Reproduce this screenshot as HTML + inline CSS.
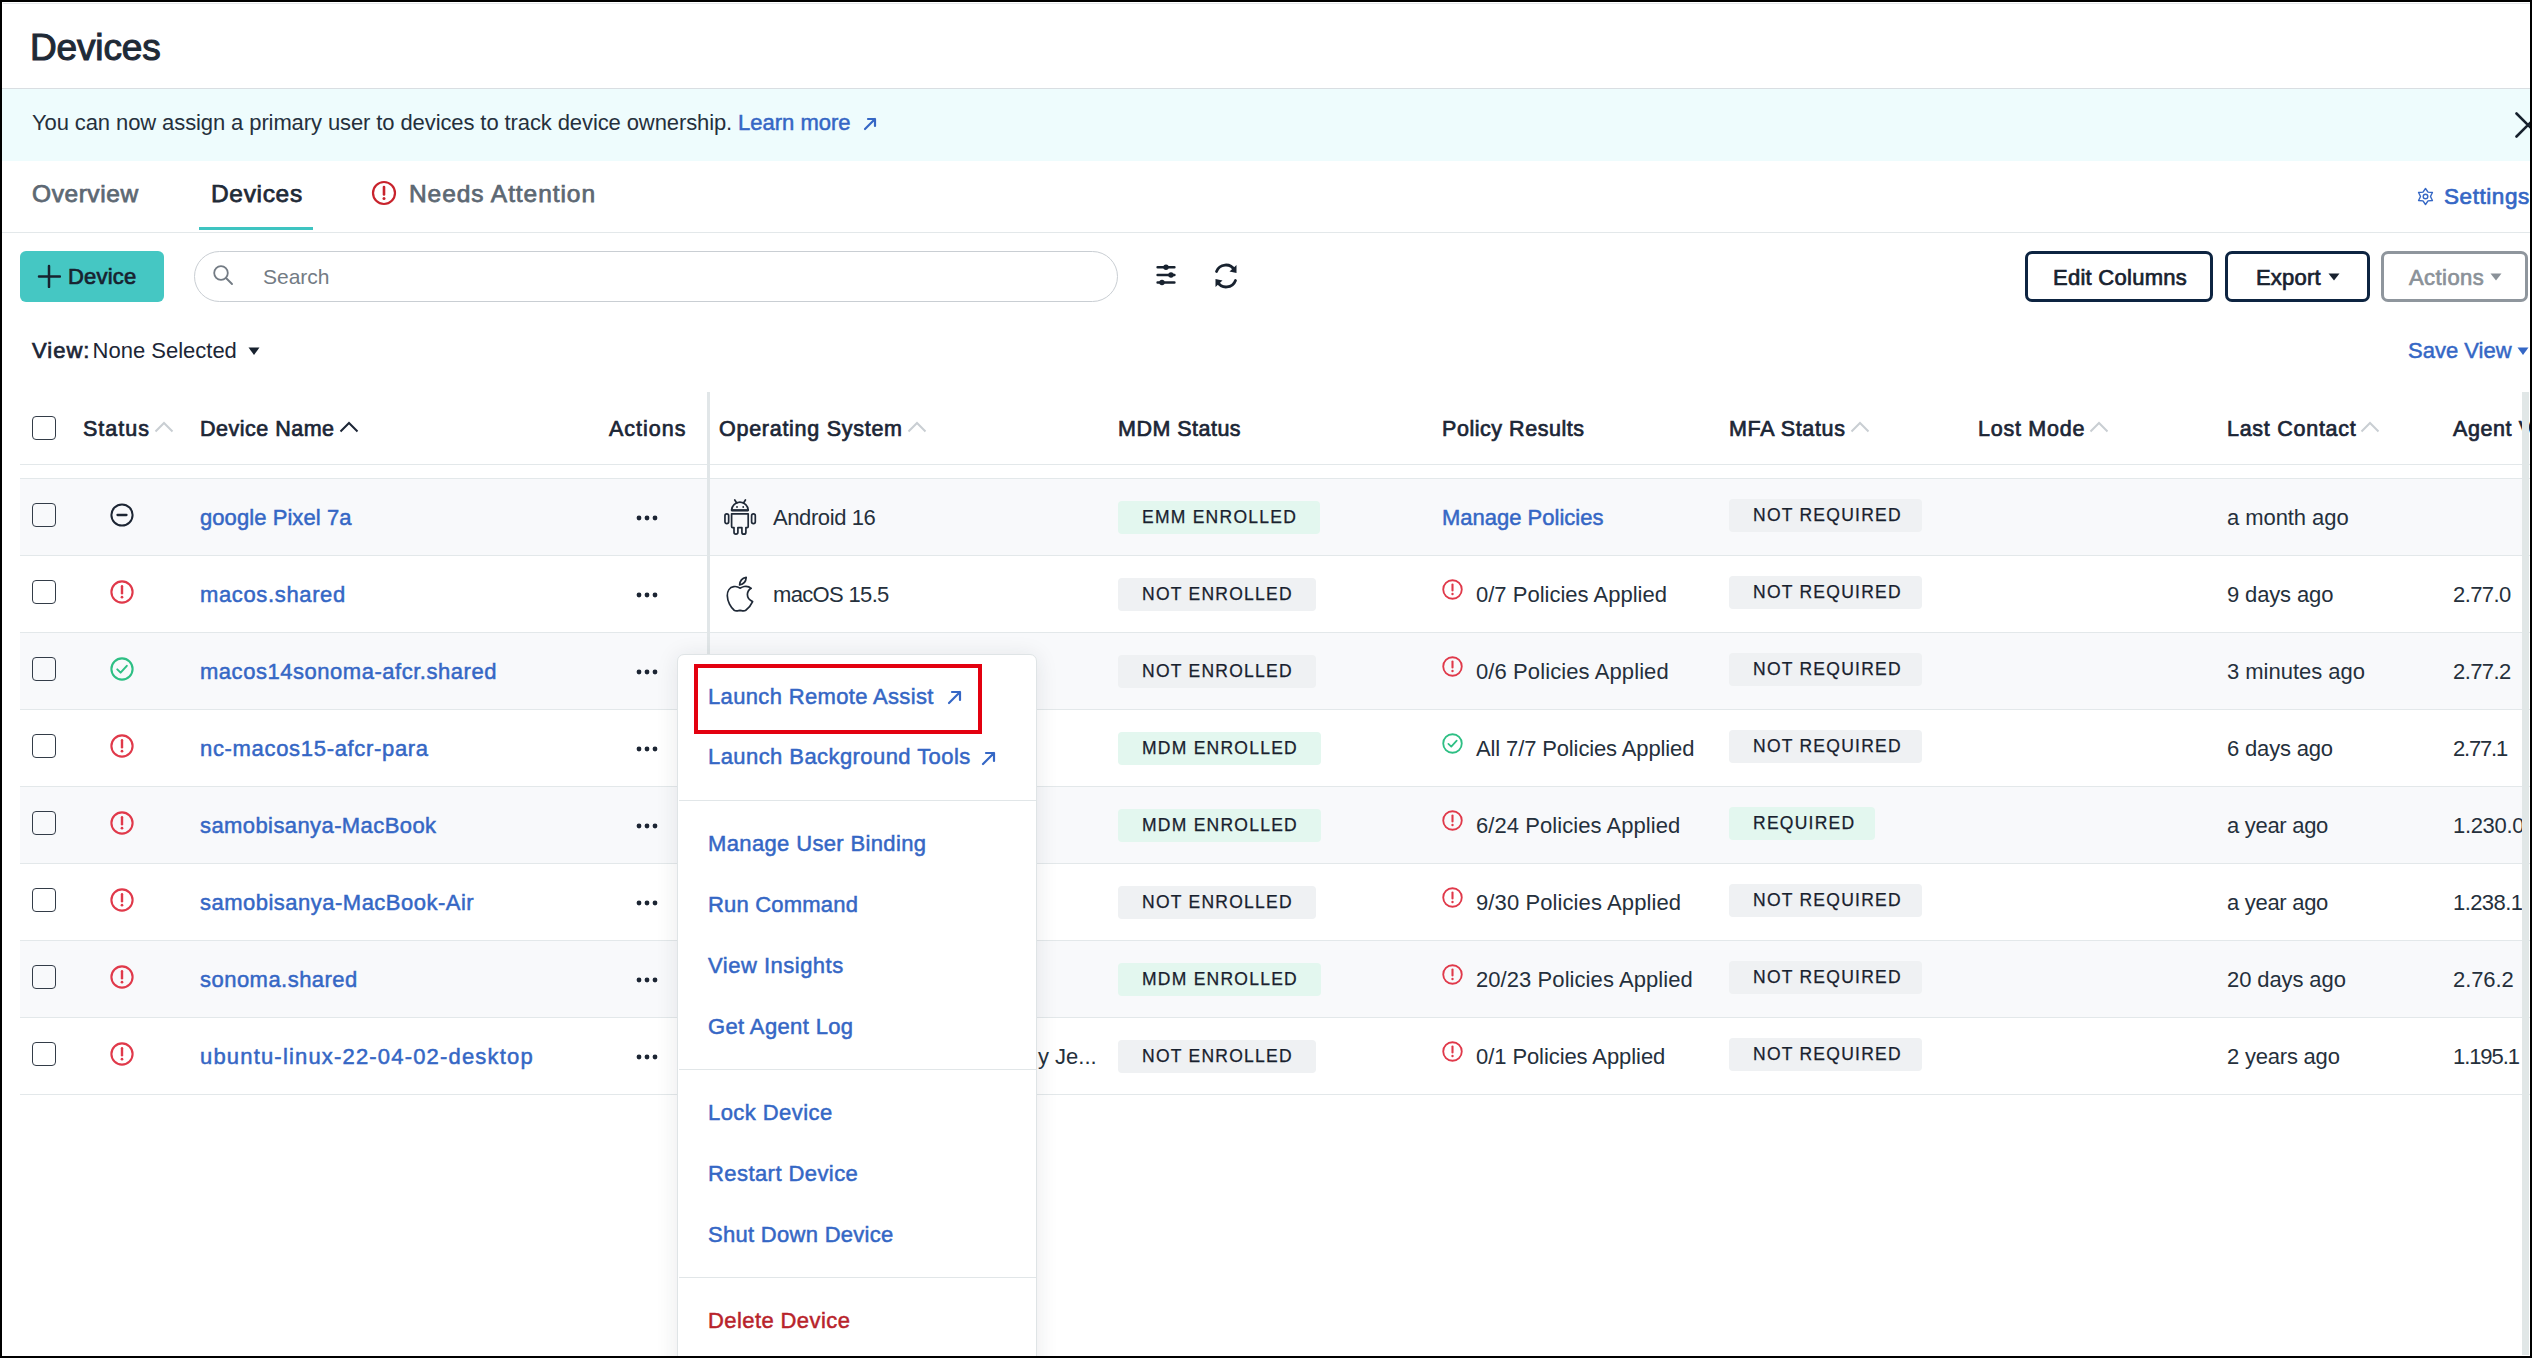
<!DOCTYPE html>
<html>
<head>
<meta charset="utf-8">
<style>
*{box-sizing:border-box;margin:0;padding:0}
html,body{width:2532px;height:1358px;overflow:hidden;background:#000}
body{font-family:"Liberation Sans",sans-serif;color:#2a3441;position:relative}
#page{position:absolute;left:2px;top:2px;width:2528px;height:1354px;background:#fff;overflow:hidden}
.a{position:absolute;white-space:nowrap}
.t{position:absolute;white-space:nowrap;line-height:30px;height:30px}
.b{font-weight:700}
.link{color:#3567c5}
.hline{position:absolute;left:18px;width:2510px;height:1px;background:#e3e8ea}
.row{position:absolute;left:18px;width:2502px;height:76px}
.alt{background:#f8f9fb}
.cb{position:absolute;width:24px;height:24px;border:1.7px solid #333c48;border-radius:4px;background:transparent}
.badge{position:absolute;height:33px;line-height:33px;font-size:17.5px;letter-spacing:1.25px;color:#18212e;padding-left:24px;border-radius:4px;-webkit-text-stroke:0.25px #18212e}
.green{background:#e3f7ef}
.grey{background:#eff1f3}
.hdr{position:absolute;top:412px;line-height:30px;height:30px;font-size:21.5px;font-weight:400;color:#1c2636;-webkit-text-stroke:0.7px #1c2636;white-space:nowrap}
.med{-webkit-text-stroke:0.5px currentColor}
</style>
</head>
<body>
<div id="page">
  <!-- top thin line -->
  <div class="a" style="left:1px;top:1px;width:2527px;height:1px;background:#e6e9ec"></div>

  <!-- Title -->
  <div class="t" style="left:28px;top:26px;font-size:37px;line-height:40px;height:40px;color:#1f2a37;-webkit-text-stroke:1.1px #1f2a37;letter-spacing:-0.15px">Devices</div>

  <!-- Banner -->
  <div class="a" style="left:0;top:86px;width:2528px;height:1px;background:#d9dee2"></div>
  <div class="a" style="left:0;top:87px;width:2528px;height:72px;background:#eefcfd"></div>
  <div class="t" style="left:30px;top:106px;font-size:22px;color:#25303c;letter-spacing:-0.1px">You can now assign a primary user to devices to track device ownership.</div>
  <div class="t link med" style="left:736px;top:106px;font-size:22px">Learn more</div>
  <svg class="a" style="left:858px;top:112px" width="20" height="20" viewBox="0 0 20 20"><path d="M5 15 L15 5 M8 5 H15 V12" fill="none" stroke="#3567c5" stroke-width="2.2" stroke-linecap="round" stroke-linejoin="round"/></svg>
  <svg class="a" style="left:2512px;top:110px" width="30" height="30" viewBox="0 0 30 30"><path d="M2.5 1.5 L25.5 24.5 M2.5 24.5 L25.5 1.5" fill="none" stroke="#17212e" stroke-width="2.6" stroke-linecap="round"/></svg>

  <!-- Tabs -->
  <div class="t" style="left:30px;top:177px;font-size:24.5px;color:#5d6873;-webkit-text-stroke:0.75px #5d6873;letter-spacing:0.57px">Overview</div>
  <div class="t" style="left:209px;top:177px;font-size:24.5px;color:#1f2a37;-webkit-text-stroke:0.75px #1f2a37;letter-spacing:0.67px">Devices</div>
  <svg class="a" style="left:368px;top:177px" width="28" height="28" viewBox="0 0 28 28"><circle cx="14" cy="14" r="11" fill="none" stroke="#c8232c" stroke-width="2.2"/><path d="M14 8 V15.5" stroke="#c8232c" stroke-width="2.6" stroke-linecap="round"/><circle cx="14" cy="19.6" r="1.5" fill="#c8232c"/></svg>
  <div class="t" style="left:407px;top:177px;font-size:24.5px;color:#5d6873;-webkit-text-stroke:0.75px #5d6873;letter-spacing:0.93px">Needs Attention</div>
  <div class="a" style="left:197px;top:225px;width:114px;height:3px;background:#3ec4c1"></div>
  <div class="a" style="left:0;top:230px;width:2528px;height:1px;background:#e3e8ea"></div>
  <svg class="a" style="left:2413px;top:184px" width="22" height="22" viewBox="0 0 22 22"><path d="M10.50 2.50 L13.00 6.17 L17.43 6.50 L15.50 10.50 L17.43 14.50 L13.00 14.83 L10.50 18.50 L8.00 14.83 L3.57 14.50 L5.50 10.50 L3.57 6.50 L8.00 6.17 Z" fill="none" stroke="#3567c5" stroke-width="1.4" stroke-linejoin="round"/><circle cx="10.5" cy="10.5" r="2.3" fill="none" stroke="#3567c5" stroke-width="1.4"/></svg>
  <div class="t" style="left:2442px;top:180px;font-size:22.5px;color:#3567c5;-webkit-text-stroke:0.7px #3567c5;letter-spacing:0.57px">Settings</div>

  <!-- Toolbar -->
  <div class="a" style="left:18px;top:249px;width:144px;height:51px;background:#45c7c3;border-radius:6px"></div>
  <svg class="a" style="left:35px;top:262px" width="24" height="24" viewBox="0 0 24 24"><path d="M12 2 V23 M2 12.5 H23" stroke="#18222f" stroke-width="2.5" stroke-linecap="round"/></svg>
  <div class="t" style="left:66px;top:260px;font-size:22px;color:#18222f;-webkit-text-stroke:0.7px #18222f;letter-spacing:0.2px">Device</div>
  <div class="a" style="left:192px;top:249px;width:924px;height:51px;border:1.5px solid #c9ced3;border-radius:26px"></div>
  <svg class="a" style="left:209px;top:261px" width="24" height="24" viewBox="0 0 24 24"><circle cx="10" cy="10" r="6.8" fill="none" stroke="#737b84" stroke-width="1.8"/><path d="M15 15 L21 21" stroke="#737b84" stroke-width="1.9" stroke-linecap="round"/></svg>
  <div class="t" style="left:261px;top:260px;font-size:21px;color:#737b84">Search</div>
  <svg class="a" style="left:1152px;top:262px" width="26" height="24" viewBox="0 0 26 24"><g stroke="#18222f" stroke-width="2.5" stroke-linecap="round"><path d="M3.6 3.3 H20.4 M3.6 11 H20.4 M3.6 18.5 H20.4"/></g><g fill="#18222f"><circle cx="12" cy="3.3" r="2.7"/><circle cx="17" cy="11" r="2.7"/><circle cx="8" cy="18.5" r="2.7"/></g></svg>
  <svg class="a" style="left:1209px;top:258.5px" width="30" height="30" viewBox="0 0 30 30"><g fill="none" stroke="#18222f" stroke-width="2.8" stroke-linecap="round"><path d="M5.5 10.5 A10 10 0 0 1 23.5 9"/><path d="M24.5 19.5 A10 10 0 0 1 6.5 21"/></g><g fill="#18222f"><path d="M25.5 4 L25.5 12 L18.5 10.5 Z"/><path d="M4.5 26 L4.5 18 L11.5 19.5 Z"/></g></svg>

  <div class="a" style="left:2023px;top:249px;width:188px;height:51px;border:3px solid #0d2441;border-radius:7px"></div>
  <div class="t" style="left:2051px;top:261px;font-size:22px;color:#18222f;-webkit-text-stroke:0.7px #18222f;letter-spacing:0.27px">Edit Columns</div>
  <div class="a" style="left:2223px;top:249px;width:145px;height:51px;border:3px solid #0d2441;border-radius:7px"></div>
  <div class="t" style="left:2254px;top:261px;font-size:22px;color:#18222f;-webkit-text-stroke:0.7px #18222f;letter-spacing:0.2px">Export</div>
  <svg class="a" style="left:2326px;top:271px" width="12" height="8" viewBox="0 0 12 8"><path d="M0.5 0.5 H11.5 L6 7.5 Z" fill="#18222f"/></svg>
  <div class="a" style="left:2379px;top:249px;width:147px;height:51px;border:3px solid #8f969d;border-radius:7px"></div>
  <div class="t" style="left:2407px;top:261px;font-size:22px;color:#8b9299;-webkit-text-stroke:0.7px #8b9299;letter-spacing:0.43px">Actions</div>
  <svg class="a" style="left:2488px;top:271px" width="12" height="8" viewBox="0 0 12 8"><path d="M0.5 0.5 H11.5 L6 7.5 Z" fill="#8b9299"/></svg>

  <!-- View row -->
  <div class="t" style="left:30px;top:334px;font-size:22px;color:#1c2636"><span style="-webkit-text-stroke:0.7px #1c2636;letter-spacing:1px">View:</span> <span style="letter-spacing:0px;margin-left:-4px">None Selected</span></div>
  <svg class="a" style="left:246px;top:345px" width="12" height="9" viewBox="0 0 12 9"><path d="M0.5 0.5 H11.5 L6 8 Z" fill="#18222f"/></svg>
  <div class="t med" style="left:2406px;top:334px;font-size:22px;color:#3567c5">Save View</div>
  <svg class="a" style="left:2515px;top:345px" width="12" height="9" viewBox="0 0 12 9"><path d="M0.5 0.5 H11.5 L6 8 Z" fill="#3567c5"/></svg>

  <!--TABLE-->
<div class="cb" style="left:30px;top:414px"></div>
<div class="hdr" style="left:81px"><span style="letter-spacing:1.0px">Status</span><svg style="display:inline-block;vertical-align:middle;margin-left:4px;position:relative;top:-3px" width="20" height="12" viewBox="0 0 20 12"><path d="M1.5 10.5 L10 2 L18.5 10.5" fill="none" stroke="#c9ced3" stroke-width="2"/></svg></div>
<div class="hdr" style="left:198px"><span style="letter-spacing:0.5px">Device Name</span><svg style="display:inline-block;vertical-align:middle;margin-left:4px;position:relative;top:-3px" width="20" height="12" viewBox="0 0 20 12"><path d="M1.5 10.5 L10 2 L18.5 10.5" fill="none" stroke="#1c2636" stroke-width="2"/></svg></div>
<div class="hdr" style="left:607px"><span style="letter-spacing:1.0px">Actions</span></div>
<div class="hdr" style="left:717px"><span style="letter-spacing:0.73px">Operating System</span><svg style="display:inline-block;vertical-align:middle;margin-left:4px;position:relative;top:-3px" width="20" height="12" viewBox="0 0 20 12"><path d="M1.5 10.5 L10 2 L18.5 10.5" fill="none" stroke="#c9ced3" stroke-width="2"/></svg></div>
<div class="hdr" style="left:1116px"><span style="letter-spacing:0.48px">MDM Status</span></div>
<div class="hdr" style="left:1440px"><span style="letter-spacing:0.54px">Policy Results</span></div>
<div class="hdr" style="left:1727px"><span style="letter-spacing:0.67px">MFA Status</span><svg style="display:inline-block;vertical-align:middle;margin-left:4px;position:relative;top:-3px" width="20" height="12" viewBox="0 0 20 12"><path d="M1.5 10.5 L10 2 L18.5 10.5" fill="none" stroke="#c9ced3" stroke-width="2"/></svg></div>
<div class="hdr" style="left:1976px"><span style="letter-spacing:0.75px">Lost Mode</span><svg style="display:inline-block;vertical-align:middle;margin-left:4px;position:relative;top:-3px" width="20" height="12" viewBox="0 0 20 12"><path d="M1.5 10.5 L10 2 L18.5 10.5" fill="none" stroke="#c9ced3" stroke-width="2"/></svg></div>
<div class="hdr" style="left:2225px"><span style="letter-spacing:0.73px">Last Contact</span><svg style="display:inline-block;vertical-align:middle;margin-left:4px;position:relative;top:-3px" width="20" height="12" viewBox="0 0 20 12"><path d="M1.5 10.5 L10 2 L18.5 10.5" fill="none" stroke="#c9ced3" stroke-width="2"/></svg></div>
<div class="hdr" style="left:2451px"><span style="letter-spacing:0.6px">Agent Version</span></div>
<div class="hline" style="top:462px"></div>
<div class="hline" style="top:476px"></div>
<div class="row alt" style="top:477px"></div>
<div class="cb" style="left:30px;top:501px"></div>
<svg class="a" style="left:108px;top:501px" width="24" height="24" viewBox="0 0 24 24"><circle cx="12" cy="12" r="10.6" fill="none" stroke="#1c2533" stroke-width="2"/><path d="M7.5 12 H16.5" stroke="#1c2533" stroke-width="2.3" stroke-linecap="round"/></svg>
<div class="t link med" style="left:198px;top:501px;font-size:22px;letter-spacing:0.07px">google Pixel 7a</div>
<svg class="a" style="left:633px;top:511px" width="24" height="10" viewBox="0 0 24 10"><g fill="#1c2533"><circle cx="4" cy="5" r="2.4"/><circle cx="12" cy="5" r="2.4"/><circle cx="20" cy="5" r="2.4"/></g></svg>
<svg class="a" style="left:722px;top:497px" width="34" height="38" viewBox="0 0 34 38"><g fill="none" stroke="#1f2937" stroke-width="1.7" stroke-linejoin="round" stroke-linecap="round">
<path d="M7.6 11.3 A8.3 8.1 0 0 1 24.2 11.3 Z"/>
<path d="M10.8 1 L12.8 4.2 M21.4 1 L19.4 4.2"/>
<path d="M7.6 14.8 H24.2 V27.6 Q24.2 28.6 23.2 28.6 H21.9 V33.2 A2 2 0 0 1 17.9 33.2 V28.6 H13.9 V33.2 A1.95 1.95 0 0 1 10 33.2 V28.6 H8.6 Q7.6 28.6 7.6 27.6 Z"/>
<rect x="0.95" y="14.8" width="3.7" height="9.9" rx="1.85"/>
<rect x="27.6" y="14.8" width="3.7" height="9.9" rx="1.85"/>
</g><path d="M7.6 11.3 H24.2" stroke="#1f2937" stroke-width="2.2"/><circle cx="13" cy="8" r="0.9" fill="#1f2937"/><circle cx="19.2" cy="8" r="0.9" fill="#1f2937"/></svg>
<div class="t" style="left:771px;top:501px;font-size:22px;color:#25303c;letter-spacing:-0.41px">Android 16</div>
<div class="badge green" style="left:1116px;top:499px;padding-right:23px">EMM ENROLLED</div>
<div class="t link med" style="left:1440px;top:501px;font-size:22px">Manage Policies</div>
<div class="badge grey" style="left:1727px;top:497px;padding-right:20px">NOT REQUIRED</div>
<div class="t" style="left:2225px;top:501px;font-size:22px;color:#25303c;letter-spacing:-0.07px">a month ago</div>
<div class="hline" style="top:553px"></div>
<div class="cb" style="left:30px;top:578px"></div>
<svg class="a" style="left:108px;top:578px" width="24" height="24" viewBox="0 0 24 24"><circle cx="12" cy="12" r="10.6" fill="none" stroke="#e0394a" stroke-width="2.1"/><path d="M12 6.3 V13.2" stroke="#e0394a" stroke-width="2.4" stroke-linecap="round"/><circle cx="12" cy="17.2" r="1.35" fill="#e0394a"/></svg>
<div class="t link med" style="left:198px;top:578px;font-size:22px;letter-spacing:0.64px">macos.shared</div>
<svg class="a" style="left:633px;top:588px" width="24" height="10" viewBox="0 0 24 10"><g fill="#1c2533"><circle cx="4" cy="5" r="2.4"/><circle cx="12" cy="5" r="2.4"/><circle cx="20" cy="5" r="2.4"/></g></svg>
<svg class="a" style="left:723px;top:573px" width="30" height="38" viewBox="0 0 30 38"><g fill="none" stroke="#1f2937" stroke-width="1.7" stroke-linejoin="round" stroke-linecap="round">
<path d="M15 13.2 C13.2 11.8 11 11.3 8.8 11.6 C4.6 12.2 2.2 16 2.3 20.8 C2.4 26.5 5.8 32.6 9.2 35.2 C11.2 36.6 13 35.6 15 35.3 C17 35.6 18.8 36.6 20.8 35.2 C23.6 33.2 26.2 29.8 27.6 26.6 C24.4 25.2 22.4 22.6 22.4 19.6 C22.4 16.8 24 14.6 26.2 13.3 C24.2 11.6 21.4 11.1 19.2 11.5 C17.8 11.8 16.3 12.5 15 13.2 Z"/>
<path d="M14.6 10 C14.8 6.4 17.2 3.2 21.2 2.4 C21 6 18.6 9.2 14.6 10 Z"/>
</g></svg>
<div class="t" style="left:771px;top:578px;font-size:22px;color:#25303c;letter-spacing:-0.66px">macOS 15.5</div>
<div class="badge grey" style="left:1116px;top:576px;padding-right:23px">NOT ENROLLED</div>
<svg class="a" style="left:1440px;top:577px" width="21" height="21" viewBox="0 0 24 24"><circle cx="12" cy="12" r="10.6" fill="none" stroke="#e0394a" stroke-width="2.1"/><path d="M12 6.3 V13.2" stroke="#e0394a" stroke-width="2.4" stroke-linecap="round"/><circle cx="12" cy="17.2" r="1.35" fill="#e0394a"/></svg>
<div class="t" style="left:1474px;top:578px;font-size:22px;color:#25303c;letter-spacing:0.01px">0/7 Policies Applied</div>
<div class="badge grey" style="left:1727px;top:574px;padding-right:20px">NOT REQUIRED</div>
<div class="t" style="left:2225px;top:578px;font-size:22px;color:#25303c;letter-spacing:-0.14px">9 days ago</div>
<div class="t" style="left:2451px;top:578px;font-size:22px;color:#25303c;letter-spacing:-0.6px">2.77.0</div>
<div class="hline" style="top:630px"></div>
<div class="row alt" style="top:631px"></div>
<div class="cb" style="left:30px;top:655px"></div>
<svg class="a" style="left:108px;top:655px" width="24" height="24" viewBox="0 0 24 24"><circle cx="12" cy="12" r="10.6" fill="none" stroke="#2ebf84" stroke-width="2.1"/><path d="M7.3 12.4 L10.6 15.6 L16.8 8.8" fill="none" stroke="#2ebf84" stroke-width="2" stroke-linecap="round" stroke-linejoin="round"/></svg>
<div class="t link med" style="left:198px;top:655px;font-size:22px;letter-spacing:0.53px">macos14sonoma-afcr.shared</div>
<svg class="a" style="left:633px;top:665px" width="24" height="10" viewBox="0 0 24 10"><g fill="#1c2533"><circle cx="4" cy="5" r="2.4"/><circle cx="12" cy="5" r="2.4"/><circle cx="20" cy="5" r="2.4"/></g></svg>
<div class="badge grey" style="left:1116px;top:653px;padding-right:23px">NOT ENROLLED</div>
<svg class="a" style="left:1440px;top:654px" width="21" height="21" viewBox="0 0 24 24"><circle cx="12" cy="12" r="10.6" fill="none" stroke="#e0394a" stroke-width="2.1"/><path d="M12 6.3 V13.2" stroke="#e0394a" stroke-width="2.4" stroke-linecap="round"/><circle cx="12" cy="17.2" r="1.35" fill="#e0394a"/></svg>
<div class="t" style="left:1474px;top:655px;font-size:22px;color:#25303c;letter-spacing:0.1px">0/6 Policies Applied</div>
<div class="badge grey" style="left:1727px;top:651px;padding-right:20px">NOT REQUIRED</div>
<div class="t" style="left:2225px;top:655px;font-size:22px;color:#25303c;letter-spacing:-0.02px">3 minutes ago</div>
<div class="t" style="left:2451px;top:655px;font-size:22px;color:#25303c;letter-spacing:-0.6px">2.77.2</div>
<div class="hline" style="top:707px"></div>
<div class="cb" style="left:30px;top:732px"></div>
<svg class="a" style="left:108px;top:732px" width="24" height="24" viewBox="0 0 24 24"><circle cx="12" cy="12" r="10.6" fill="none" stroke="#e0394a" stroke-width="2.1"/><path d="M12 6.3 V13.2" stroke="#e0394a" stroke-width="2.4" stroke-linecap="round"/><circle cx="12" cy="17.2" r="1.35" fill="#e0394a"/></svg>
<div class="t link med" style="left:198px;top:732px;font-size:22px;letter-spacing:0.68px">nc-macos15-afcr-para</div>
<svg class="a" style="left:633px;top:742px" width="24" height="10" viewBox="0 0 24 10"><g fill="#1c2533"><circle cx="4" cy="5" r="2.4"/><circle cx="12" cy="5" r="2.4"/><circle cx="20" cy="5" r="2.4"/></g></svg>
<div class="badge green" style="left:1116px;top:730px;padding-right:23px">MDM ENROLLED</div>
<svg class="a" style="left:1440px;top:731px" width="21" height="21" viewBox="0 0 24 24"><circle cx="12" cy="12" r="10.6" fill="none" stroke="#2ebf84" stroke-width="2.1"/><path d="M7.3 12.4 L10.6 15.6 L16.8 8.8" fill="none" stroke="#2ebf84" stroke-width="2" stroke-linecap="round" stroke-linejoin="round"/></svg>
<div class="t" style="left:1474px;top:732px;font-size:22px;color:#25303c;letter-spacing:-0.13px">All 7/7 Policies Applied</div>
<div class="badge grey" style="left:1727px;top:728px;padding-right:20px">NOT REQUIRED</div>
<div class="t" style="left:2225px;top:732px;font-size:22px;color:#25303c;letter-spacing:-0.17px">6 days ago</div>
<div class="t" style="left:2451px;top:732px;font-size:22px;color:#25303c;letter-spacing:-1.2px">2.77.1</div>
<div class="hline" style="top:784px"></div>
<div class="row alt" style="top:785px"></div>
<div class="cb" style="left:30px;top:809px"></div>
<svg class="a" style="left:108px;top:809px" width="24" height="24" viewBox="0 0 24 24"><circle cx="12" cy="12" r="10.6" fill="none" stroke="#e0394a" stroke-width="2.1"/><path d="M12 6.3 V13.2" stroke="#e0394a" stroke-width="2.4" stroke-linecap="round"/><circle cx="12" cy="17.2" r="1.35" fill="#e0394a"/></svg>
<div class="t link med" style="left:198px;top:809px;font-size:22px;letter-spacing:0.41px">samobisanya-MacBook</div>
<svg class="a" style="left:633px;top:819px" width="24" height="10" viewBox="0 0 24 10"><g fill="#1c2533"><circle cx="4" cy="5" r="2.4"/><circle cx="12" cy="5" r="2.4"/><circle cx="20" cy="5" r="2.4"/></g></svg>
<div class="badge green" style="left:1116px;top:807px;padding-right:23px">MDM ENROLLED</div>
<svg class="a" style="left:1440px;top:808px" width="21" height="21" viewBox="0 0 24 24"><circle cx="12" cy="12" r="10.6" fill="none" stroke="#e0394a" stroke-width="2.1"/><path d="M12 6.3 V13.2" stroke="#e0394a" stroke-width="2.4" stroke-linecap="round"/><circle cx="12" cy="17.2" r="1.35" fill="#e0394a"/></svg>
<div class="t" style="left:1474px;top:809px;font-size:22px;color:#25303c;letter-spacing:0.06px">6/24 Policies Applied</div>
<div class="badge green" style="left:1727px;top:805px;padding-right:20px">REQUIRED</div>
<div class="t" style="left:2225px;top:809px;font-size:22px;color:#25303c;letter-spacing:-0.29px">a year ago</div>
<div class="t" style="left:2451px;top:809px;font-size:22px;color:#25303c;letter-spacing:-0.33px">1.230.0</div>
<div class="hline" style="top:861px"></div>
<div class="cb" style="left:30px;top:886px"></div>
<svg class="a" style="left:108px;top:886px" width="24" height="24" viewBox="0 0 24 24"><circle cx="12" cy="12" r="10.6" fill="none" stroke="#e0394a" stroke-width="2.1"/><path d="M12 6.3 V13.2" stroke="#e0394a" stroke-width="2.4" stroke-linecap="round"/><circle cx="12" cy="17.2" r="1.35" fill="#e0394a"/></svg>
<div class="t link med" style="left:198px;top:886px;font-size:22px;letter-spacing:0.49px">samobisanya-MacBook-Air</div>
<svg class="a" style="left:633px;top:896px" width="24" height="10" viewBox="0 0 24 10"><g fill="#1c2533"><circle cx="4" cy="5" r="2.4"/><circle cx="12" cy="5" r="2.4"/><circle cx="20" cy="5" r="2.4"/></g></svg>
<div class="badge grey" style="left:1116px;top:884px;padding-right:23px">NOT ENROLLED</div>
<svg class="a" style="left:1440px;top:885px" width="21" height="21" viewBox="0 0 24 24"><circle cx="12" cy="12" r="10.6" fill="none" stroke="#e0394a" stroke-width="2.1"/><path d="M12 6.3 V13.2" stroke="#e0394a" stroke-width="2.4" stroke-linecap="round"/><circle cx="12" cy="17.2" r="1.35" fill="#e0394a"/></svg>
<div class="t" style="left:1474px;top:886px;font-size:22px;color:#25303c;letter-spacing:0.1px">9/30 Policies Applied</div>
<div class="badge grey" style="left:1727px;top:882px;padding-right:20px">NOT REQUIRED</div>
<div class="t" style="left:2225px;top:886px;font-size:22px;color:#25303c;letter-spacing:-0.29px">a year ago</div>
<div class="t" style="left:2451px;top:886px;font-size:22px;color:#25303c;letter-spacing:-0.57px">1.238.1</div>
<div class="hline" style="top:938px"></div>
<div class="row alt" style="top:939px"></div>
<div class="cb" style="left:30px;top:963px"></div>
<svg class="a" style="left:108px;top:963px" width="24" height="24" viewBox="0 0 24 24"><circle cx="12" cy="12" r="10.6" fill="none" stroke="#e0394a" stroke-width="2.1"/><path d="M12 6.3 V13.2" stroke="#e0394a" stroke-width="2.4" stroke-linecap="round"/><circle cx="12" cy="17.2" r="1.35" fill="#e0394a"/></svg>
<div class="t link med" style="left:198px;top:963px;font-size:22px;letter-spacing:0.47px">sonoma.shared</div>
<svg class="a" style="left:633px;top:973px" width="24" height="10" viewBox="0 0 24 10"><g fill="#1c2533"><circle cx="4" cy="5" r="2.4"/><circle cx="12" cy="5" r="2.4"/><circle cx="20" cy="5" r="2.4"/></g></svg>
<div class="badge green" style="left:1116px;top:961px;padding-right:23px">MDM ENROLLED</div>
<svg class="a" style="left:1440px;top:962px" width="21" height="21" viewBox="0 0 24 24"><circle cx="12" cy="12" r="10.6" fill="none" stroke="#e0394a" stroke-width="2.1"/><path d="M12 6.3 V13.2" stroke="#e0394a" stroke-width="2.4" stroke-linecap="round"/><circle cx="12" cy="17.2" r="1.35" fill="#e0394a"/></svg>
<div class="t" style="left:1474px;top:963px;font-size:22px;color:#25303c;letter-spacing:0.07px">20/23 Policies Applied</div>
<div class="badge grey" style="left:1727px;top:959px;padding-right:20px">NOT REQUIRED</div>
<div class="t" style="left:2225px;top:963px;font-size:22px;color:#25303c;letter-spacing:-0.1px">20 days ago</div>
<div class="t" style="left:2451px;top:963px;font-size:22px;color:#25303c;letter-spacing:-0.1px">2.76.2</div>
<div class="hline" style="top:1015px"></div>
<div class="cb" style="left:30px;top:1040px"></div>
<svg class="a" style="left:108px;top:1040px" width="24" height="24" viewBox="0 0 24 24"><circle cx="12" cy="12" r="10.6" fill="none" stroke="#e0394a" stroke-width="2.1"/><path d="M12 6.3 V13.2" stroke="#e0394a" stroke-width="2.4" stroke-linecap="round"/><circle cx="12" cy="17.2" r="1.35" fill="#e0394a"/></svg>
<div class="t link med" style="left:198px;top:1040px;font-size:22px;letter-spacing:1.18px">ubuntu-linux-22-04-02-desktop</div>
<svg class="a" style="left:633px;top:1050px" width="24" height="10" viewBox="0 0 24 10"><g fill="#1c2533"><circle cx="4" cy="5" r="2.4"/><circle cx="12" cy="5" r="2.4"/><circle cx="20" cy="5" r="2.4"/></g></svg>
<div class="t" style="left:1036px;top:1040px;font-size:22px;color:#25303c;letter-spacing:0px">y Je...</div>
<div class="badge grey" style="left:1116px;top:1038px;padding-right:23px">NOT ENROLLED</div>
<svg class="a" style="left:1440px;top:1039px" width="21" height="21" viewBox="0 0 24 24"><circle cx="12" cy="12" r="10.6" fill="none" stroke="#e0394a" stroke-width="2.1"/><path d="M12 6.3 V13.2" stroke="#e0394a" stroke-width="2.4" stroke-linecap="round"/><circle cx="12" cy="17.2" r="1.35" fill="#e0394a"/></svg>
<div class="t" style="left:1474px;top:1040px;font-size:22px;color:#25303c;letter-spacing:-0.08px">0/1 Policies Applied</div>
<div class="badge grey" style="left:1727px;top:1036px;padding-right:20px">NOT REQUIRED</div>
<div class="t" style="left:2225px;top:1040px;font-size:22px;color:#25303c;letter-spacing:-0.21px">2 years ago</div>
<div class="t" style="left:2451px;top:1040px;font-size:22px;color:#25303c;letter-spacing:-1.07px">1.195.1</div>
<div class="hline" style="top:1092px"></div>
<div class="a" style="left:705px;top:390px;width:3px;height:270px;background:#e1e6e8"></div>
<div class="a" style="left:2520px;top:390px;width:7px;height:963px;background:#e1e7e7"></div>
<!--/TABLE-->

  <!-- Dropdown menu -->
  <div class="a" style="left:675px;top:652px;width:360px;height:760px;background:#fff;border:1px solid #dfe4e6;border-radius:7px;box-shadow:0 2px 22px rgba(30,40,50,0.10)"></div>
  <div class="t link med" style="left:706px;top:680px;font-size:22px;letter-spacing:0.34px">Launch Remote Assist</div>
  <svg class="a" style="left:943px;top:686px" width="20" height="20" viewBox="0 0 20 20"><path d="M4 15 L15 4 M7 4 H15 V12" fill="none" stroke="#3567c5" stroke-width="2.2" stroke-linecap="round" stroke-linejoin="round"/></svg>
  <div class="a" style="left:692px;top:662px;width:288px;height:70px;border:4px solid #e3000f"></div>
  <div class="t link med" style="left:706px;top:740px;font-size:22px;letter-spacing:0.43px">Launch Background Tools</div>
  <svg class="a" style="left:977px;top:747px" width="20" height="20" viewBox="0 0 20 20"><path d="M4 15 L15 4 M7 4 H15 V12" fill="none" stroke="#3567c5" stroke-width="2.2" stroke-linecap="round" stroke-linejoin="round"/></svg>
  <div class="a" style="left:677px;top:798px;width:357px;height:1px;background:#e1e6e8"></div>
  <div class="t link med" style="left:706px;top:827px;font-size:22px;letter-spacing:0.36px">Manage User Binding</div>
  <div class="t link med" style="left:706px;top:888px;font-size:22px;letter-spacing:0.2px">Run Command</div>
  <div class="t link med" style="left:706px;top:949px;font-size:22px;letter-spacing:0.5px">View Insights</div>
  <div class="t link med" style="left:706px;top:1010px;font-size:22px;letter-spacing:0.37px">Get Agent Log</div>
  <div class="a" style="left:677px;top:1067px;width:357px;height:1px;background:#e1e6e8"></div>
  <div class="t link med" style="left:706px;top:1096px;font-size:22px;letter-spacing:0.43px">Lock Device</div>
  <div class="t link med" style="left:706px;top:1157px;font-size:22px;letter-spacing:0.43px">Restart Device</div>
  <div class="t link med" style="left:706px;top:1218px;font-size:22px;letter-spacing:0.29px">Shut Down Device</div>
  <div class="a" style="left:677px;top:1275px;width:357px;height:1px;background:#e1e6e8"></div>
  <div class="t med" style="left:706px;top:1304px;font-size:22px;letter-spacing:0.41px;color:#b8232b">Delete Device</div>

</div>
</body>
</html>
